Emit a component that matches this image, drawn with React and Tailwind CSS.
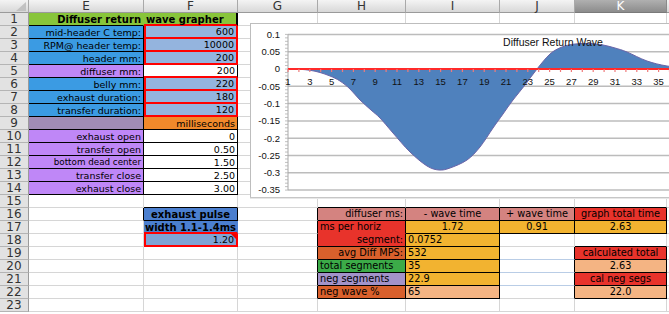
import React from "react";
import { twMerge } from "tailwind-merge";

const COLS = ["E", "F", "G", "H", "I", "J", "K", "L"];
const ALIGN = { left: "justify-start", right: "justify-end", center: "justify-center" };

// fills
const GREEN = "bg-[#88c53a]";
const BLUE = "bg-[#3b9be3]";
const LBLUE = "bg-[#94b4de]";
const PURP = "bg-[#bf87f7]";
const BOX = "border-r-black border-b-black";
const RED_BOX = "border-r-2 border-b-2 border-r-[#f00] border-b-[#f00] shadow-[inset_2px_0_0_#f00]";
const BIG = "text-[9.75px]";

const rows = {
  1: {
    E: { t: "Diffuser return", a: "right", c: `${GREEN} font-bold text-[10px] border-r-[#88c53a] border-b-black` },
    F: { t: "wave grapher", c: `${GREEN} font-bold text-[10px] border-r-2 border-r-black border-b-2 border-b-[#f00]` },
  },
  2: {
    E: { t: "mid-header C temp:", a: "right", c: `${BLUE} ${BOX}` },
    F: { t: "600", a: "right", c: `${LBLUE} ${RED_BOX}` },
  },
  3: {
    E: { t: "RPM@ header temp:", a: "right", c: `${BLUE} ${BOX}` },
    F: { t: "10000", a: "right", c: `${LBLUE} ${RED_BOX}` },
  },
  4: {
    E: { t: "header mm:", a: "right", c: `${BLUE} ${BOX}` },
    F: { t: "200", a: "right", c: `${LBLUE} ${RED_BOX}` },
  },
  5: {
    E: { t: "diffuser mm:", a: "right", c: `${PURP} ${BOX}` },
    F: { t: "200", a: "right", c: "border-r-black border-b-2 border-b-[#f00]" },
  },
  6: {
    E: { t: "belly mm:", a: "right", c: `${BLUE} ${BOX}` },
    F: { t: "220", a: "right", c: `${LBLUE} ${RED_BOX}` },
  },
  7: {
    E: { t: "exhaust duration:", a: "right", c: `${BLUE} ${BOX}` },
    F: { t: "180", a: "right", c: `${LBLUE} ${RED_BOX}` },
  },
  8: {
    E: { t: "transfer duration:", a: "right", c: `${BLUE} ${BOX}` },
    F: { t: "120", a: "right", c: `${LBLUE} ${RED_BOX}` },
  },
  9: {
    E: { t: "", c: `bg-[#a18cb5] ${BOX}` },
    F: { t: "milliseconds", a: "right", c: `bg-[#f1892b] ${BOX}` },
  },
  10: {
    E: { t: "exhaust open", a: "right", c: `${PURP} ${BOX}` },
    F: { t: "0", a: "right", c: BOX },
  },
  11: {
    E: { t: "transfer open", a: "right", c: `${PURP} ${BOX}` },
    F: { t: "0.50", a: "right", c: BOX },
  },
  12: {
    E: { t: "bottom dead center", a: "right", c: `${PURP} ${BOX} text-[8.75px]` },
    F: { t: "1.50", a: "right", c: BOX },
  },
  13: {
    E: { t: "transfer close", a: "right", c: `${PURP} ${BOX}` },
    F: { t: "2.50", a: "right", c: BOX },
  },
  14: {
    E: { t: "exhaust close", a: "right", c: `${PURP} ${BOX}` },
    F: { t: "3.00", a: "right", c: BOX },
  },
  15: {
    F: { c: "border-b-black" },
    H: { c: "border-b-black" },
    I: { c: "border-b-black" },
    J: { c: "border-b-black" },
    K: { c: "border-b-black" },
  },
  16: {
    E: { c: "border-r-black" },
    F: { t: "exhaust pulse", a: "center", c: `bg-[#4b7fcf] font-bold text-[10px] ${BOX}` },
    G: { c: "border-r-black" },
    H: { t: "diffuser ms:", a: "right", c: `bg-[#d48380] ${BIG} ${BOX}` },
    I: { t: "- wave time", a: "center", c: `bg-[#d48380] ${BIG} ${BOX}` },
    J: { t: "+ wave time", a: "center", c: `bg-[#d48380] ${BIG} ${BOX}` },
    K: { t: "graph total time", a: "center", c: `bg-[#e8332b] ${BIG} ${BOX}` },
  },
  17: {
    F: { t: "width 1.1-1.4ms", a: "center", c: "bg-[#4b7fcf] font-bold text-[10px] px-0 border-r-[#4b7fcf] border-b-2 border-b-[#f00]" },
    G: { c: "border-r-black" },
    H: { t: "ms per horiz", c: `bg-[#e8332b] ${BIG} border-r-black border-b-[#e8332b]` },
    I: { t: "1.72", a: "center", c: `bg-[#f2b330] ${BIG} ${BOX}` },
    J: { t: "0.91", a: "center", c: `bg-[#f2b330] ${BIG} ${BOX}` },
    K: { t: "2.63", a: "center", c: `bg-[#f2b330] ${BIG} ${BOX}` },
  },
  18: {
    F: { t: "1.20", a: "right", c: `relative bg-[#7fa4d5] ${RED_BOX}`, tri: true },
    G: { c: "border-r-black" },
    H: { t: "segment:", a: "right", c: `bg-[#e8332b] ${BIG} ${BOX}` },
    I: { t: "0.0752", c: `bg-[#f2b330] ${BIG} ${BOX}` },
    K: { c: "border-b-black" },
  },
  19: {
    G: { c: "border-r-black" },
    H: { t: "avg Diff MPS:", a: "right", c: `bg-[#d9602c] ${BIG} ${BOX}` },
    I: { t: "532", c: `bg-[#f2b330] ${BIG} ${BOX}` },
    J: { c: "border-r-black border-b-[#b9cde6]" },
    K: { t: "calculated total", a: "center", c: `bg-[#e8332b] ${BIG} ${BOX}` },
  },
  20: {
    G: { c: "border-r-black" },
    H: { t: "total segments", c: `bg-[#3cab48] ${BIG} ${BOX}` },
    I: { t: "35", c: `bg-[#f2b330] ${BIG} ${BOX}` },
    J: { c: "border-r-black border-b-[#b9cde6]" },
    K: { t: "2.63", a: "center", c: `bg-[#f4b483] ${BIG} ${BOX}` },
  },
  21: {
    G: { c: "border-r-black" },
    H: { t: "neg segments", c: `bg-[#a393c9] ${BIG} ${BOX}` },
    I: { t: "22.9", c: `bg-[#f2b330] ${BIG} ${BOX}` },
    J: { c: "border-r-black border-b-[#b9cde6]" },
    K: { t: "cal neg segs", a: "center", c: `bg-[#e8332b] ${BIG} ${BOX}` },
  },
  22: {
    G: { c: "border-r-black" },
    H: { t: "neg wave %", c: `bg-[#d9602c] ${BIG} ${BOX}` },
    I: { t: "65", c: `bg-[#f4b483] ${BIG} ${BOX}` },
    J: { c: "border-r-black" },
    K: { t: "22.0", a: "center", c: `bg-[#f4b483] ${BIG} ${BOX}` },
  },
};

function Cell({ t, a = "left", c = "", tri }) {
  return (
    <div
      className={twMerge(
        "flex items-center whitespace-nowrap bg-white text-black text-[9.5px] leading-none pl-[2px] pr-[2px] pt-px border-r border-b border-r-[#d6d6d6] border-b-[#d6d6d6]",
        ALIGN[a],
        c
      )}
    >
      {t}
      {tri && <span className="absolute top-0 right-0 w-0 h-0 border-l-[5px] border-l-transparent border-t-[5px] border-t-[#e00]" />}
    </div>
  );
}

// turns a list of points into a smooth path
function smooth(pts) {
  let d = `M${pts[0][0]},${pts[0][1]}`;
  for (let i = 0; i < pts.length - 1; i++) {
    const p0 = pts[i - 1] || pts[i];
    const p1 = pts[i];
    const p2 = pts[i + 1];
    const p3 = pts[i + 2] || p2;
    const c1x = p1[0] + (p2[0] - p0[0]) / 6;
    const c1y = p1[1] + (p2[1] - p0[1]) / 6;
    const c2x = p2[0] - (p3[0] - p1[0]) / 6;
    const c2y = p2[1] - (p3[1] - p1[1]) / 6;
    d += ` C${c1x.toFixed(1)},${c1y.toFixed(1)} ${c2x.toFixed(1)},${c2y.toFixed(1)} ${p2[0]},${p2[1]}`;
  }
  return d;
}

const wave = [
  [288, 69], [300, 69.3], [310, 70.3], [320, 72.5], [330, 76], [340, 81], [350, 89],
  [360, 100], [371, 110], [380, 118], [393, 133], [410, 152], [427, 166], [439, 170],
  [450, 168], [467, 160], [480, 147], [493, 128], [503, 114], [513, 100], [525, 85],
  [537, 69], [550, 54], [562, 47], [575, 44], [590, 43.5], [603, 45], [615, 48],
  [627, 52], [647, 61], [667, 66], [690, 68],
];

const X0 = 288;
const STEP = 10.9;
const yOf = (v) => 69 - v * 346;
const yTicks = [
  [0.1, "0.1"], [0.05, "0.05"], [0, "0"], [-0.05, "-0.05"], [-0.1, "-0.1"],
  [-0.15, "-0.15"], [-0.2, "-0.2"], [-0.25, "-0.25"], [-0.3, "-0.3"], [-0.35, "-0.35"],
];

function Chart() {
  const area = smooth(wave) + " L690,69 Z";
  const minor = [];
  for (let v = 0.1; v >= -0.3501; v -= 0.01) minor.push(yOf(v));
  const cats = Array.from({ length: 37 }, (_, i) => i + 1);
  return (
    <div className="absolute left-[250px] top-[23px] w-[430px] h-[176px] bg-white">
      <svg width="430" height="176" className="block">
        <g transform="translate(-250,-23)" fontFamily="'Liberation Sans', Arial, sans-serif">
          <rect x="250.5" y="23.5" width="440" height="174" fill="#fff" stroke="#bdbdbd" />
          <line x1="250" y1="198" x2="690" y2="198" stroke="#cfcfcf" />
          {yTicks.map(([v, label]) => (
            <g key={label}>
              <line x1={X0} y1={yOf(v)} x2="690" y2={yOf(v)} stroke="#bcbcbc" strokeWidth="1.5" />
              <text x="280" y={yOf(v) + 3.3} fontSize="9.5" textAnchor="end" fill="#111">
                {label}
              </text>
            </g>
          ))}
          <path d={area} fill="#4f81bd" stroke="#6a64a8" strokeWidth="1" />
          <line x1={X0} y1={yOf(0.1)} x2={X0} y2={yOf(-0.35)} stroke="#a8a8a8" strokeWidth="1" />
          {minor.map((y, i) => (
            <line key={i} x1={X0 - 3} y1={y} x2={X0} y2={y} stroke="#b0b0b0" strokeWidth="0.8" />
          ))}
          <line x1={X0} y1="69" x2="690" y2="69" stroke="#ff2a2a" strokeWidth="2" />
          {cats.map((n) => (
            <line key={n} x1={X0 + (n - 1) * STEP} y1="69" x2={X0 + (n - 1) * STEP} y2="72" stroke="#f07a7a" strokeWidth="1.2" />
          ))}
          {cats.filter((n) => n % 2 === 1 && n <= 35).map((n) => (
            <text key={n} x={X0 + (n - 1) * STEP} y="85" fontSize="9.5" textAnchor="middle" fill="#111">
              {n}
            </text>
          ))}
          <text x="553" y="46" fontSize="10.5" textAnchor="middle" fill="#111">
            Diffuser Return Wave
          </text>
        </g>
      </svg>
    </div>
  );
}

export default function App() {
  const head = "flex items-center justify-center text-[12px] text-[#333] bg-linear-to-b from-[#f4f4f4] to-[#d8d8d8] border-r border-b border-r-[#a9a9a9] border-b-[#9a9a9a]";
  return (
    <div className="relative w-[669px] h-[314px] overflow-hidden bg-white font-['DejaVu_Sans',Verdana,sans-serif]">
      <div className="grid grid-cols-[29px_115px_94px_80px_88px_94px_75px_92px_1fr] grid-rows-[13px] auto-rows-[13px]">
        <div className="relative bg-linear-to-b from-[#f4f4f4] to-[#d8d8d8] border-r border-b border-r-[#a9a9a9] border-b-[#9a9a9a]">
          <svg width="10" height="9" className="absolute right-[2px] bottom-[1px]">
            <polygon points="10,0 10,9 0,9" fill="#c2c2c2" />
          </svg>
        </div>
        {COLS.map((col) =>
          col === "K" ? (
            <div key={col} className="flex items-center justify-center text-[12px] text-white bg-linear-to-b from-[#b0b0b0] to-[#8c8c8c] border-r border-b border-r-[#8a8a8a] border-b-[#7a7a7a]">
              {col}
            </div>
          ) : (
            <div key={col} className={head}>
              {col === "L" ? "" : col}
            </div>
          )
        )}
        {Array.from({ length: 23 }, (_, i) => i + 1).map((n) => (
          <React.Fragment key={n}>
            <div className="flex items-center justify-center text-[12px] text-[#333] bg-[#e2e2e2] border-r border-b border-r-[#9a9a9a] border-b-[#b4b4b4]">
              {n}
            </div>
            {COLS.map((col) => {
              const s = (rows[n] && rows[n][col]) || {};
              return <Cell key={col} {...s} />;
            })}
          </React.Fragment>
        ))}
      </div>
      <Chart />
    </div>
  );
}
